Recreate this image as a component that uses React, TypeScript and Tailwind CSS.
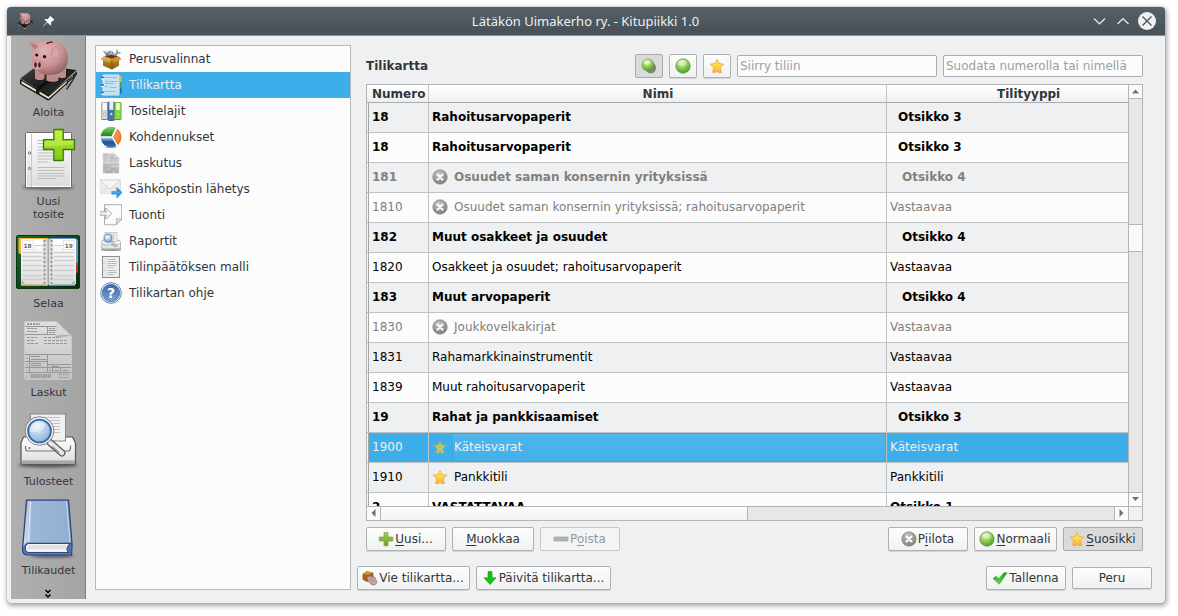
import React from "react";

/* Shared gradients used by every icon on the page */
function Defs() {
  return (
    <svg width="0" height="0" className="absolute" aria-hidden="true">
      <defs>
        <radialGradient id="pig" cx="0.4" cy="0.3" r="0.75">
          <stop offset="0" stopColor="#e2b0b2" />
          <stop offset="0.55" stopColor="#cf9698" />
          <stop offset="1" stopColor="#8d5f61" />
        </radialGradient>
        <linearGradient id="black" x1="0" y1="0" x2="1" y2="1">
          <stop offset="0" stopColor="#4a4a4a" />
          <stop offset="0.5" stopColor="#1d1d1d" />
          <stop offset="1" stopColor="#333" />
        </linearGradient>
        <linearGradient id="paper" x1="0" y1="0" x2="0" y2="1">
          <stop offset="0" stopColor="#ffffff" />
          <stop offset="1" stopColor="#dcdcdc" />
        </linearGradient>
        <linearGradient id="gray" x1="0" y1="0" x2="0" y2="1">
          <stop offset="0" stopColor="#e0e0e0" />
          <stop offset="1" stopColor="#c2c2c2" />
        </linearGradient>
        <linearGradient id="lime" x1="0" y1="0" x2="0" y2="1">
          <stop offset="0" stopColor="#b4ec2c" />
          <stop offset="1" stopColor="#7fcb1c" />
        </linearGradient>
        <linearGradient id="moss" x1="0" y1="0" x2="0" y2="1">
          <stop offset="0" stopColor="#a3cd55" />
          <stop offset="1" stopColor="#6da02c" />
        </linearGradient>
        <radialGradient id="ball" cx="0.4" cy="0.25" r="0.75">
          <stop offset="0" stopColor="#dcf4bd" />
          <stop offset="0.5" stopColor="#94cf58" />
          <stop offset="1" stopColor="#559a28" />
        </radialGradient>
        <radialGradient id="dull" cx="0.4" cy="0.25" r="0.8">
          <stop offset="0" stopColor="#c6c6c4" />
          <stop offset="1" stopColor="#7b7c79" />
        </radialGradient>
        <linearGradient id="gold" x1="0" y1="0" x2="0" y2="1">
          <stop offset="0" stopColor="#fde76a" />
          <stop offset="0.55" stopColor="#fbd440" />
          <stop offset="1" stopColor="#f9a94a" />
        </linearGradient>
        <radialGradient id="lens" cx="0.4" cy="0.3" r="0.75">
          <stop offset="0" stopColor="#e8f1fa" />
          <stop offset="1" stopColor="#86b0da" />
        </radialGradient>
        <linearGradient id="cover" x1="0" y1="0" x2="1" y2="0">
          <stop offset="0" stopColor="#d4e0ee" />
          <stop offset="0.18" stopColor="#9db7d6" />
          <stop offset="1" stopColor="#92aed0" />
        </linearGradient>
        <linearGradient id="forest" x1="0" y1="0" x2="1" y2="1">
          <stop offset="0" stopColor="#23652f" />
          <stop offset="0.5" stopColor="#0c4a1d" />
          <stop offset="1" stopColor="#032a0d" />
        </linearGradient>
        <linearGradient id="box" x1="0" y1="0" x2="0" y2="1">
          <stop offset="0" stopColor="#c98d29" />
          <stop offset="1" stopColor="#8a5a0c" />
        </linearGradient>
        <linearGradient id="orange" x1="0" y1="0" x2="1" y2="1">
          <stop offset="0" stopColor="#fbb36c" />
          <stop offset="1" stopColor="#e46a10" />
        </linearGradient>
        <linearGradient id="green" x1="0" y1="0" x2="0" y2="1">
          <stop offset="0" stopColor="#8cd07a" />
          <stop offset="1" stopColor="#1f8016" />
        </linearGradient>
        <linearGradient id="navy" x1="0" y1="0" x2="0" y2="1">
          <stop offset="0" stopColor="#a9c5e8" />
          <stop offset="0.45" stopColor="#1f4e92" />
          <stop offset="1" stopColor="#3f78bf" />
        </linearGradient>
        <linearGradient id="help" x1="0" y1="0" x2="0" y2="1">
          <stop offset="0" stopColor="#3b67a5" />
          <stop offset="1" stopColor="#7ea3d2" />
        </linearGradient>
        <linearGradient id="check" x1="0" y1="0" x2="0" y2="1">
          <stop offset="0" stopColor="#1fa31f" />
          <stop offset="1" stopColor="#62e04a" />
        </linearGradient>
        <filter id="soft" x="-30%" y="-100%" width="160%" height="300%">
          <feGaussianBlur stdDeviation="1.6" />
        </filter>
      </defs>
    </svg>
  );
}

type Box = { size: number; view: number; children: React.ReactNode; className?: string };
function Svg({ size, view, children, className = "" }: Box) {
  return (
    <svg width={size} height={size} viewBox={`0 0 ${view} ${view}`} fill="none" className={`shrink-0 ${className}`}>
      {children}
    </svg>
  );
}

/* ---------- large icons ---------- */
function Piggy({ size = 64 }: { size?: number }) {
  return (
    <Svg size={size} view={64}>
      <path d="M4 41v5l28 16.500 2-1 27-25v-3L33 57z" fill="#111" />
      <path d="M5.500 43l27 15.800L57 37.500V39L32.500 61 5.500 45.500z" fill="#e9e4c4" />
      <path d="M4.300 40.500L22 27 60.500 32 33 57.500z" fill="url(#black)" />
      <path d="M20 50.500L48 30.500l3 .6L23.500 52z" fill="#000" opacity="0.55" />
      <path d="M20 51l3.500 2v3.800l-3.500-2z" fill="#1a1a1a" />
      <path d="M60.500 34c-1 4-3 8-10 17.500" stroke="#333" strokeWidth="1.500" />
      <path d="M58 38.500l-6.500 4-.8 5" stroke="#222" strokeWidth="1.200" />
      <path d="M19 27h9.500v13.500c-1.500 2-7.500 2-9.500 0zM30.500 28h11.800v14.500c-2 1.800-9.500 1.800-11.800 0zM42 26h8v13c-1.500 1.500-6 1.500-8 0z" fill="#c08a8c" />
      <path d="M13 4.500c2-1.500 6-1.500 10 0 3-1.500 7-2.300 12-2 11 1 17 9 17 18C52 32 44 37 34 37c-9 0-17-4.500-18-14-1-4 0-8 2-11-2-2-4-4-5-7.500z" fill="url(#pig)" />
      <path d="M14.500 5c3 0 6 1.500 8 3.500l-3.500 3c-2-1.500-3.500-3.500-4.500-6.500z" fill="#b27f81" />
      <ellipse cx="39.500" cy="15" rx="4" ry="5.300" fill="#d9a5a7" stroke="#b98688" strokeWidth="0.700" />
      <ellipse cx="21.500" cy="27" rx="5.700" ry="5" fill="#d89b9d" stroke="#b07c7e" strokeWidth="0.500" />
      <ellipse cx="19.500" cy="26.800" rx="1.300" ry="2.700" fill="#3a1c1d" />
      <ellipse cx="23.500" cy="27" rx="1.300" ry="2.700" fill="#3a1c1d" />
      <circle cx="20.700" cy="17" r="1.600" fill="#1a0d0d" />
      <circle cx="28.500" cy="18.700" r="1.600" fill="#1a0d0d" />
      <path d="M30.500 5.500c2-1 4-1.500 6-1.500" stroke="#4e2022" strokeWidth="1.700" />
    </Svg>
  );
}

function NewDocument() {
  return (
    <Svg size={64} view={64}>
      <ellipse cx="32" cy="60" rx="26" ry="2.500" fill="#000" opacity="0.45" filter="url(#soft)" />
      <rect x="9.500" y="5.500" width="46" height="55" rx="1.500" fill="url(#paper)" stroke="#6b6b6b" />
      <rect x="10.500" y="6.500" width="44" height="53" stroke="#fff" />
      <path d="M15.500 7v53" stroke="#c9c9c9" />
      <circle cx="13.500" cy="26" r="1.200" stroke="#777" fill="#eee" />
      <circle cx="13.500" cy="41.500" r="1.200" stroke="#777" fill="#eee" />
      <path d="M21.500 13.500h27M21.500 16.500h27M21.500 20h27M21.500 23h27M21.500 26h27M21.500 29h27M21.500 32h18M21.500 35h11M21.500 40.500h27M21.500 43.500h27M21.500 46.500h27M21.500 49h27M21.500 51.500h18" stroke="#bdbdbd" strokeWidth="1.200" />
      <path d="M37.800 2.500h9.400v10.200h11.300v9.800H47.200v11h-9.400v-11H27.500v-9.800h10.300z" fill="url(#lime)" stroke="#3e7a0a" strokeWidth="1.300" strokeLinejoin="round" />
      <path d="M39.200 4h6.600v10H57v3.500c-10 1-20 2-28 2V14h10.200z" fill="#e0f88a" opacity="0.35" />
    </Svg>
  );
}

function Diary() {
  const lines = [23.5, 27.5, 31.5, 36.5, 41.5, 46.5, 50.5];
  return (
    <Svg size={64} view={64}>
      <rect x="0.500" y="6.500" width="63" height="53" rx="1.500" fill="url(#forest)" stroke="#06350f" />
      <path d="M2.500 9h30v3h-26v14l-4-2z" fill="#f0b23a" />
      <path d="M33 9h26l3 2v25h-4z" fill="#7391cb" />
      <path d="M59 34h2.800v9l-2.800 2z" fill="#c8352c" />
      <path d="M5 55h27v2H5z" fill="#d69b31" />
      <path d="M33 55h26v2H33z" fill="#6d8cc2" />
      <rect x="5" y="10" width="55" height="45.500" rx="1" fill="url(#paper)" />
      <path d="M27 10h10v45.500H27z" fill="#dcdcdc" />
      <path d="M31.500 10h1.500v45.500h-1.500z" fill="#a9a9a9" />
      {lines.map((y) => (
        <path key={y} d={`M6.500 ${y}h20M38 ${y}h20`} stroke="#cfcfcf" strokeWidth="1.600" />
      ))}
      <path d="M17.500 16.500h9M38 16.500h9" stroke="#cfcfcf" />
      <path d="M28.500 11v44M35.500 11v44" stroke="#888" strokeWidth="1.800" strokeDasharray="1.800 2.400" />
      <rect x="6.500" y="11.500" width="10.500" height="9" fill="#fcfcfc" stroke="#d5d5d5" strokeWidth="0.600" />
      <rect x="47.500" y="11.500" width="10.500" height="9" fill="#fcfcfc" stroke="#d5d5d5" strokeWidth="0.600" />
      <text x="11.500" y="18.500" fontSize="5.800" fontWeight="bold" textAnchor="middle" fill="#666" fontFamily="DejaVu Sans, sans-serif">18</text>
      <text x="52.800" y="18.500" fontSize="5.800" fontWeight="bold" textAnchor="middle" fill="#666" fontFamily="DejaVu Sans, sans-serif">19</text>
      <path d="M6.500 52v2h2M58 52v2h-2" stroke="#777" strokeWidth="0.700" />
    </Svg>
  );
}

function InvoiceSheet({ size = 64 }: { size?: number }) {
  return (
    <Svg size={size} view={64}>
      <path d="M8.500 4.500q0-1 1-1H40L55.500 18v42q0 1.500-1.500 1.500H10q-1.500 0-1.500-1.500z" fill="url(#gray)" stroke="#c9c9c9" strokeWidth="0.800" />
      <g stroke="#969696" strokeWidth="1">
        <path d="M11 6h13" strokeDasharray="2 1" strokeWidth="2" />
        <path d="M9 8.500h33M9 16.500h41M31.500 9v7.500M31.500 12.500h9" />
        <path d="M11 10.500h10M11 13.500h11M33 10.500h6M33 14.500h6" strokeDasharray="3 .6" />
        <path d="M11 19.500h10M11 22.500h7M11 25.500h11M28 19.500h17M28 22.500h23M28 25.500h23" strokeDasharray="3 1" />
        <path d="M9 36.500h46M9 43.500h22.500M9 49.500h46M9 54.500h46M31.500 36.500v18M13.500 36.500v18M31.500 46.500h24M36.500 46v8.500M44.500 50v4" />
        <path d="M15 38.500h9M15 41.500h15M15 45.500h10M15 47.500h10M10.500 40.500h1.500M10.500 46.500h1.500M33 52.500h2M37 48.500h6M38 52.500h5M47 52.500h5" />
        <path d="M15 58h20" strokeWidth="4" strokeDasharray="1.600 .8" />
        <path d="M43 56.500h10M43 59.500h10" strokeDasharray="2.500 1" />
      </g>
      <path d="M40 3.500c1 6-.5 12-1 15 5-2 12-2 16.500-.5z" fill="#d9d9d9" stroke="#c2c2c2" strokeWidth="0.600" />
      <path d="M39 18.500c5-2 12-2 16.500-.5-4 0-10 1-15.500 2z" fill="#999" opacity="0.6" />
    </Svg>
  );
}

function PrintPreview({ size = 64 }: { size?: number }) {
  return (
    <Svg size={size} view={64}>
      <ellipse cx="32" cy="58" rx="30" ry="2.500" fill="#000" opacity="0.5" filter="url(#soft)" />
      <path d="M7.500 30h49l3 6v19q0 2.500-2.500 2.500H7.500Q5 57.500 5 55V36z" fill="url(#paper)" stroke="#565656" strokeWidth="1.200" />
      <path d="M5.500 53.500h53.500v1.500q0 2-2 2H7.500q-2 0-2-2z" fill="#a6a6a6" />
      <rect x="14.500" y="7" width="35" height="27" fill="#f1f1f1" stroke="#888" />
      <path d="M17 10.500h27M17 13.500h27M17 16.500h27M17 19.500h27M17 22.500h27M17 25.500h27" stroke="#c3c3c3" strokeWidth="1.200" />
      <path d="M9.500 39v2.500q0 2.500 2.500 2.500h40q2.500 0 2.500-2.500V38.500" stroke="#777" strokeWidth="1.200" />
      <circle cx="13.500" cy="41" r="1" fill="#666" />
      <path d="M34 35.500L46 46" stroke="#5c5c5c" strokeWidth="7" strokeLinecap="round" />
      <path d="M34 35.500L46 46" stroke="#e6e6e4" strokeWidth="4.500" strokeLinecap="round" />
      <path d="M36 39.500l7 6" stroke="#8e8e8c" strokeWidth="1.600" />
      <circle cx="23.500" cy="24" r="14.300" fill="#f4f4f4" stroke="#777" strokeWidth="0.900" />
      <circle cx="23.500" cy="24" r="11.400" fill="url(#lens)" stroke="#3a69a8" strokeWidth="1.900" />
      <path d="M14.500 25a9 8 0 0 1 15-8c-1 6-8 9-15 8z" fill="#fff" opacity="0.4" />
    </Svg>
  );
}

function BlueBook() {
  return (
    <Svg size={64} view={64}>
      <ellipse cx="36" cy="59.500" rx="22" ry="2" fill="#000" opacity="0.5" filter="url(#soft)" />
      <path d="M10.500 4h42l3.500 43.500v4l-.5 7.500H11Q6.500 58.500 6.500 53z" fill="#5f7db4" stroke="#2c4380" strokeWidth="1.200" strokeLinejoin="round" />
      <path d="M11.500 5h40l3.500 41.500H12Q9 47 7.500 50z" fill="url(#cover)" />
      <path d="M14.500 5.500L12.500 46" stroke="#e3ebf4" strokeWidth="1.200" />
      <path d="M13 47.500h41.500c-4 3-5 6-1.500 9H13c-5 0-5-9 0-9z" fill="#f2f2f2" stroke="#2f4884" strokeWidth="1.100" />
      <path d="M53.500 48.500c-3 2.500-3.500 4.500-.5 7.500h2.500z" fill="#4f6cac" />
      <path d="M12 50h38M11.500 52h38" stroke="#d0d0d0" />
      <path d="M50.500 5l3.500 41" stroke="#cddbed" strokeWidth="1" />
    </Svg>
  );
}

/* ---------- list icons, 22px ---------- */
const L = ({ children }: { children: React.ReactNode }) => (
  <Svg size={22} view={22}>{children}</Svg>
);

const OpenBox = () => (
  <L>
    <path d="M5 8l1.500-5.500L8 4.500 11 2l1.500 5L17 3.500l1 2L16 9z" fill="#a4afb7" />
    <path d="M3.500 3l4 4.500M9.500 3l-2 4.500M12 3.500l1.500 4" stroke="#66737e" strokeWidth="1.100" />
    <path d="M15 7.500l3-3M17 1.800c-.5 2 1 3.500 3.500 3" stroke="#8f9ba5" strokeWidth="1.600" />
    <path d="M3 9.500h16v8.300l-7 3.700-9-3.700z" fill="url(#box)" />
    <path d="M4 8.500l7-1.800 7.500 1.800-6.500 2.200z" fill="#5f3c08" />
    <path d="M3.500 8.500l8.300 2.200L9 14.500.5 11.500z" fill="#dba646" />
    <path d="M11.800 10.700l7-2.500 2.700 3L14 14.500z" fill="#cd922e" />
    <path d="M12 15v6" stroke="#6d4708" strokeWidth="0.800" />
  </L>
);
const Notebook = () => (
  <L>
    <path d="M17 2h4.500v6H17z" fill="#e0bd39" /><path d="M17 8h4.500v6H17z" fill="#3da344" /><path d="M17 14h4.500v5.500H17z" fill="#1565bd" />
    <rect x="2.500" y="0.500" width="17" height="21" rx="1" fill="#c3e3f5" stroke="#97c9e6" strokeWidth="0.800" />
    <path d="M5 3.500h12M5 7.500h5M11 7.500h6M5 9.500h9M5 12.500h3M10 13.500h6M5 17.500h10" stroke="#76b1d6" strokeWidth="0.900" strokeDasharray="3 .7" />
    <path d="M1 3.500h3M1 11h3M1 18.500h3" stroke="#3c6d8e" strokeWidth="1.300" />
    <path d="M1 5h3M1 12.500h3M1 20h3" stroke="#fff" strokeWidth="1" />
  </L>
);
const Binders = () => (
  <L>
    <rect x="1.500" y="2.500" width="6.500" height="17" rx="0.800" fill="#d4d6d4" stroke="#9b9e9b" strokeWidth="0.700" />
    <rect x="3" y="3" width="3.500" height="7" fill="#fafafa" />
    <rect x="8" y="2" width="6.500" height="18.500" rx="0.800" fill="#4674b2" stroke="#2c5288" strokeWidth="0.700" />
    <rect x="9.300" y="0.800" width="4" height="9" fill="#e8eef5" />
    <rect x="14.700" y="2.500" width="6.500" height="17" rx="0.800" fill="#86dc3a" stroke="#63ad25" strokeWidth="0.700" />
    <rect x="16.200" y="3" width="3.500" height="7" fill="#f2fbe8" />
    <path d="M1.500 19.500h6.500M14.700 19.500h6.500" stroke="#666" strokeWidth="0.600" />
    <circle cx="4.800" cy="14" r="1.300" fill="#f7f7f7" stroke="#888" strokeWidth="0.500" />
    <circle cx="11.300" cy="14" r="1.500" fill="#d8e6f8" stroke="#2c5288" strokeWidth="0.500" />
    <circle cx="18" cy="14" r="1.300" fill="#e8fbd2" stroke="#4f9a1a" strokeWidth="0.500" />
  </L>
);
const Pie = () => (
  <L>
    <ellipse cx="11" cy="21.200" rx="6" ry="0.800" fill="#000" opacity="0.3" />
    <path d="M12 11.700L16.500 20A10.300 10.300 0 0 1 .8 11.700z" fill="url(#navy)" />
    <path d="M11.500 10.200H.8A10.300 10.300 0 0 1 15.800 1.800z" fill="url(#green)" />
    <path d="M13.600 11L17.500 3.300A10.500 10.500 0 0 1 18 18.500z" fill="url(#orange)" stroke="#d4650c" strokeWidth="0.700" />
  </L>
);
const Mail = () => (
  <L>
    <path d="M0 2h20.500v13.500H0z" fill="#ececec" stroke="#dadada" strokeWidth="0.700" />
    <path d="M0 2h20.500L11 10.500Q10 11.200 9 10.500z" fill="#f6f6f6" stroke="#c9c9c9" strokeWidth="0.700" />
    <path d="M0 15.500l7.500-6M20.500 15.500l-7.500-6" stroke="#d5d5d5" strokeWidth="0.700" />
    <path d="M11.500 13h5V8.800l6 5.700-6 6.200v-4.200h-5z" fill="#2b95ee" />
    <path d="M11.500 13.500h5.500l4.500 1H11.500z" fill="#6cbaf8" />
  </L>
);
const ImportDoc = () => (
  <L>
    <path d="M4.500.7h17.200v14.800L16 20.800H4.500z" fill="#fbfbfb" stroke="#a5a5a5" strokeWidth="0.900" />
    <path d="M21.500 15.500c-2-1-4-1-5.500-.6.500 1.800.8 3.800 0 5.800z" fill="#dedede" stroke="#a8a8a8" strokeWidth="0.700" />
    <path d="M0 7.800h6.500L4.500 4.500h2.300l5 5-5 5H4.500l2-3.300H0z" fill="#f4f4f4" stroke="#a2a2a2" strokeWidth="0.900" />
  </L>
);
const Template = () => (
  <L>
    <rect x="2.500" y="0.500" width="17" height="21" fill="#ededed" stroke="#8d8d8d" strokeWidth="1" />
    <path d="M5.500 1v20" stroke="#dadada" strokeWidth="0.800" />
    <path d="M7.500 3.500h8M7.500 5.500h9M7.500 7.500h9M7.500 9.500h9M7.500 11.500h6M7.500 14.500h9M7.500 16.500h9M7.500 18.500h6" stroke="#bcbcbc" strokeWidth="1" />
    <circle cx="4" cy="7" r="0.500" fill="#777" /><circle cx="4" cy="14" r="0.500" fill="#777" />
  </L>
);
const Help = () => (
  <L>
    <circle cx="11" cy="11" r="10.300" fill="#fff" stroke="#5a80b5" strokeWidth="1" />
    <circle cx="11" cy="11" r="8.700" fill="url(#help)" stroke="#41689f" strokeWidth="0.700" />
    <text x="11" y="16" textAnchor="middle" fontSize="14" fontWeight="bold" fill="#fff" fontFamily="DejaVu Sans, sans-serif">?</text>
  </L>
);

/* ---------- small icons, 16px ---------- */
const Star = ({ tinted = false }: { tinted?: boolean }) => (
  <Svg size={16} view={16}>
    <path d="M8 1.400l2.100 4.100 4.700.7-3.400 3.400 1 5H9.500L8 13.300l-1.500 1.300H3.600l1-5L1.200 6.200l4.700-.7z" fill={tinted ? "#adc67e" : "url(#gold)"} stroke={tinted ? "#86a572" : "#eba54a"} strokeWidth="0.800" strokeLinejoin="round" />
  </Svg>
);
const Cross = () => (
  <Svg size={16} view={16}>
    <circle cx="8" cy="8" r="7.100" fill="url(#dull)" stroke="#7b7c79" strokeWidth="0.800" />
    <path d="M5.500 5.500l5 5M10.500 5.500l-5 5" stroke="#fff" strokeWidth="2.100" strokeLinecap="round" />
  </Svg>
);
const GreenBall = () => (
  <Svg size={16} view={16}>
    <circle cx="8" cy="8" r="7.200" fill="url(#ball)" stroke="#549425" strokeWidth="0.700" />
    <ellipse cx="7.500" cy="5" rx="4.500" ry="3" fill="#fff" opacity="0.35" />
  </Svg>
);
const TwoBalls = () => (
  <Svg size={16} view={16}>
    <circle cx="9.800" cy="9.900" r="5.300" fill="#808080" />
    <circle cx="7" cy="7" r="6" fill="url(#ball)" stroke="#5f9e37" strokeWidth="0.600" />
    <ellipse cx="6.200" cy="4.600" rx="3.300" ry="2.200" fill="#fff" opacity="0.5" />
  </Svg>
);
const Plus = () => (
  <Svg size={16} view={16}>
    <path d="M6 1.500h4V6h4.800v4H10v4.800H6V10H1.200V6H6z" fill="url(#moss)" stroke="#7ea645" strokeWidth="0.700" />
  </Svg>
);
const Minus = () => (
  <Svg size={16} view={16}>
    <rect x="1" y="6" width="14" height="4" fill="#b3b3b3" stroke="#a3a3a3" strokeWidth="0.700" />
  </Svg>
);
const ExportBox = () => (
  <Svg size={16} view={16}>
    <path d="M1 4l4-2.500L11 3v7l-6 1.500L1 9.500z" fill="#a16a18" stroke="#6e4508" strokeWidth="0.600" />
    <path d="M1 4l4-2.500L11 3 6 4.500z" fill="#d39b40" />
    <path d="M5 6.500l3-.5 5 1.500 2 5-2.500 2.700-3.500-1L5.500 9.500z" fill="#cfa3a0" stroke="#8a6260" strokeWidth="0.700" />
    <path d="M7 8l4 4M9 7.500l3 3.500" stroke="#9d7270" strokeWidth="0.600" />
  </Svg>
);
const DownArrow = () => (
  <Svg size={16} view={16}>
    <path d="M6 1.500h4v6.300h4L8 14.600 2 7.800h4z" fill="#12c312" stroke="#13930f" strokeWidth="0.600" />
  </Svg>
);
const Check = () => (
  <Svg size={16} view={16}>
    <path d="M1 8.500l3.200-2.200 2.600 2.500L12 2.800h3.200L7.200 14.200z" fill="url(#check)" stroke="#2a9a2a" strokeWidth="0.600" strokeLinejoin="round" />
  </Svg>
);

/* ---------- widgets ---------- */
type BtnProps = { w: string; icon?: React.ReactNode; children?: React.ReactNode; pressed?: boolean; disabled?: boolean; h?: string };
function Button({ w, icon, children, pressed, disabled, h = "h-6" }: BtnProps) {
  return (
    <button
      className={`flex shrink-0 items-center justify-center rounded-[2px] border whitespace-nowrap ${w} ${h} ${
        pressed ? "border-[#a8aaac] bg-[#dadadb]" : disabled ? "border-[#c5c7c9] bg-[#f3f4f5]" : "border-[#aeb0b2] bg-linear-to-b from-[#fdfdfd] to-[#f0f1f1] shadow-[0_1px_0_#d2d4d5]"
      } ${disabled ? "text-[#95989b]" : "text-[#31363b]"}`}
    >
      {icon && <span className={children ? "mr-px -ml-px" : ""}>{icon}</span>}
      {children && <span>{children}</span>}
    </button>
  );
}
const U = ({ children }: { children: string }) => <span className="underline underline-offset-2">{children}</span>;

function Arrow({ d }: { d: string }) {
  return (
    <svg width="13" height="13" viewBox="0 0 13 13" fill="#6e7174"><path d={d} /></svg>
  );
}

const sidebar = [
  { label: ["Aloita"], icon: <Piggy /> },
  { label: ["Uusi", "tosite"], icon: <NewDocument /> },
  { label: ["Selaa"], icon: <Diary /> },
  { label: ["Laskut"], icon: <InvoiceSheet /> },
  { label: ["Tulosteet"], icon: <PrintPreview /> },
  { label: ["Tilikaudet"], icon: <BlueBook /> },
];

const pages = [
  { label: "Perusvalinnat", icon: <OpenBox /> },
  { label: "Tilikartta", icon: <Notebook />, active: true },
  { label: "Tositelajit", icon: <Binders /> },
  { label: "Kohdennukset", icon: <Pie /> },
  { label: "Laskutus", icon: <InvoiceSheet size={22} /> },
  { label: "Sähköpostin lähetys", icon: <Mail /> },
  { label: "Tuonti", icon: <ImportDoc /> },
  { label: "Raportit", icon: <PrintPreview size={22} /> },
  { label: "Tilinpäätöksen malli", icon: <Template /> },
  { label: "Tilikartan ohje", icon: <Help /> },
];

type Row = { no: string; name: string; type: string; level?: number; hidden?: boolean; star?: boolean; selected?: boolean };
const rows: Row[] = [
  { no: "18", name: "Rahoitusarvopaperit", type: "Otsikko 3", level: 3 },
  { no: "18", name: "Rahoitusarvopaperit", type: "Otsikko 3", level: 3 },
  { no: "181", name: "Osuudet saman konsernin yrityksissä", type: "Otsikko 4", level: 4, hidden: true },
  { no: "1810", name: "Osuudet saman konsernin yrityksissä; rahoitusarvopaperit", type: "Vastaavaa", hidden: true },
  { no: "182", name: "Muut osakkeet ja osuudet", type: "Otsikko 4", level: 4 },
  { no: "1820", name: "Osakkeet ja osuudet; rahoitusarvopaperit", type: "Vastaavaa" },
  { no: "183", name: "Muut arvopaperit", type: "Otsikko 4", level: 4 },
  { no: "1830", name: "Joukkovelkakirjat", type: "Vastaavaa", hidden: true },
  { no: "1831", name: "Rahamarkkinainstrumentit", type: "Vastaavaa" },
  { no: "1839", name: "Muut rahoitusarvopaperit", type: "Vastaavaa" },
  { no: "19", name: "Rahat ja pankkisaamiset", type: "Otsikko 3", level: 3 },
  { no: "1900", name: "Käteisvarat", type: "Käteisvarat", star: true, selected: true },
  { no: "1910", name: "Pankkitili", type: "Pankkitili", star: true },
  { no: "2", name: "VASTATTAVAA", type: "Otsikko 1", level: 1 },
];

function TableRow({ row, index }: { row: Row; index: number }) {
  const bg = row.selected ? "bg-[#3daee9]" : index % 2 ? "bg-[#fcfcfc]" : "bg-[#eff0f1]";
  const color = row.selected ? "text-[#eff0f1]" : row.hidden ? "text-[#808080]" : "text-black";
  const indent = row.level === 4 ? "pl-[15px]" : row.level === 3 ? "pl-[11px]" : "pl-[3px]";
  const marked = row.hidden || row.star;
  return (
    <div className={`flex h-[30px] shrink-0 ${color} ${row.level ? "font-bold" : ""}`}>
      <div className="w-px shrink-0 border-b border-[#b0b1b2] bg-[#f4f5f5]" />
      <div className={`flex w-[60px] shrink-0 items-center border-b border-l border-[#c1c2c3] border-l-[#a5a6a7] pb-px pl-[3px] ${bg}`}>{row.no}</div>
      <div className={`flex w-[458px] shrink-0 items-center border-b border-l border-[#c1c2c3] ${bg} ${marked ? "" : "pb-px pl-[3px]"}`}>
        {marked && (
          <span className="flex h-full w-[23px] shrink-0 items-center justify-end pr-1 pb-px">{row.star ? <Star tinted={row.selected} /> : <Cross />}</span>
        )}
        <span className={marked ? `flex h-full flex-1 items-center pb-px ${row.selected ? "border border-[#3ba6df] bg-linear-to-b from-[#50b6ec] to-[#42afe9] pl-px" : "pl-[2px]"}` : ""}>{row.name}</span>
      </div>
      <div className={`flex flex-1 items-center border-b border-l border-[#c1c2c3] pb-px ${indent} ${bg}`}>{row.type}</div>
    </div>
  );
}

function AccountTable() {
  return (
    <div className="flex h-[437px] w-[777px] flex-col border border-[#b4b5b6] bg-[#fcfcfc]">
      <div className="flex h-[421px]">
        <div className="flex w-[761px] flex-col overflow-hidden">
          <div className="flex h-[18px] shrink-0 border-b border-[#a9abac] bg-linear-to-b from-white to-[#eeefef] leading-[18px] font-bold text-[#31363b]">
            <div className="w-[61px] shrink-0 pl-[5px]">Numero</div>
            <div className="w-[458px] shrink-0 border-l border-[#c4c5c6] pl-px text-center">Nimi</div>
            <div className="flex-1 border-l border-[#c4c5c6] pl-[110px]">Tilityyppi</div>
          </div>
          {rows.map((r, i) => <TableRow key={i} row={r} index={i} />)}
        </div>
        <div className="flex w-[14px] flex-col border-l border-[#b4b5b6] bg-[#e6e7e7]">
          <div className="h-[14px] border-b border-[#b4b5b6] bg-[#fafafa]"><Arrow d="M6.500 4.500L10 8.500H3z" /></div>
          <div className="h-[125px]" />
          <div className="h-[28px] border-y border-[#b4b5b6] bg-[#fafafa]" />
          <div className="flex-1" />
          <div className="h-[14px] border-t border-[#b4b5b6] bg-[#fafafa]"><Arrow d="M6.500 8L3 4h7z" /></div>
        </div>
      </div>
      <div className="flex h-[14px] border-t border-[#b4b5b6] bg-[#e6e7e7]">
        <div className="w-[14px] border-r border-[#b4b5b6] bg-[#fafafa]"><Arrow d="M4.500 6l4-4v8z" /></div>
        <div className="w-[367px] border-r border-[#b4b5b6] bg-linear-to-b from-[#fdfdfd] to-[#f1f2f2]" />
        <div className="flex-1" />
        <div className="w-[14px] border-l border-[#b4b5b6] bg-[#fafafa]"><Arrow d="M8.500 6l-4-4v8z" /></div>
        <div className="w-[14px] border-l border-[#b4b5b6] bg-[#eff0f1]" />
      </div>
    </div>
  );
}

function Field({ text }: { text: string }) {
  return (
    <div className="flex h-[22px] w-[200px] shrink-0 items-center overflow-hidden rounded-[2px] border border-[#aaacad] bg-[#fcfcfc] pl-[2px] whitespace-nowrap text-[#9b9ea1]">
      {text}
    </div>
  );
}

export default function App() {
  return (
    <div className="h-[616px] w-[1178px] overflow-hidden bg-white pt-[7px] pl-[7px] font-['DejaVu_Sans',sans-serif] text-[12px] leading-[14px] text-[#31363b]">
      <Defs />
      <div className="flex h-[596px] w-[1158px] flex-col overflow-hidden rounded-[4px] bg-[#eff0f1] shadow-[1px_2px_5px_1px_rgba(0,0,0,0.35),0_0_1px_#888]">
        <header className="flex h-[29px] shrink-0 items-center border-b border-[#3daee9] bg-linear-to-b from-[#556068] to-[#475057] pr-[9px] pl-[9px] text-[#eff0f1]">
          <Piggy size={18} />
          <svg width="14" height="14" viewBox="0 0 14 14" className="ml-[8px]" fill="#fcfcfc">
            <path d="M8 1.500L12.500 6l-1.500.5-2 2 .2 3-1.400-.8-2.300-2.300L1 12.500 .8 12.300 5 8 2.700 5.800 2.500 5l3 .2 2-2z" />
          </svg>
          <div className="flex-1 pl-[22px] text-center font-['Noto_Sans',sans-serif] text-[13px]">Lätäkön Uimakerho ry. - Kitupiikki 1.0</div>
          <svg width="63" height="18" viewBox="0 0 63 18" fill="none" stroke="#eff0f1" strokeWidth="1.200">
            <path d="M1 6.500l5.500 5.500L12 6.500M24.500 12L30 6.500l5.500 5.500" />
            <circle cx="54" cy="9" r="9" fill="#eff0f1" stroke="none" />
            <path d="M49.500 4.500l9 9M58.500 4.500l-9 9" stroke="#475057" strokeWidth="1.300" />
          </svg>
        </header>

        <div className="flex h-[567px]">
          <nav className="ml-1 flex h-[563px] w-[75px] shrink-0 flex-col items-center border-r border-[#7e7e7e] bg-linear-to-r from-[#afafaf] to-[#a4a4a4] pt-[2px] text-[11px] leading-[13px]">
            {sidebar.map((s) => (
              <div key={s.label[0]} className="flex flex-col items-center pb-[8px]">
                {s.icon}
                <div className="mt-[4px] pl-px text-center">
                  {s.label.map((t) => <div key={t}>{t}</div>)}
                </div>
              </div>
            ))}
            <svg width="8" height="10" viewBox="0 0 8 10" className="mt-[4px] shrink-0" fill="none" stroke="#000" strokeWidth="1.500">
              <path d="M1.500 1L4 3.500 6.500 1M1.500 5.500L4 8l2.500-2.500" />
            </svg>
          </nav>

          <div className="mt-[9px] ml-[9px] h-[545px] w-[256px] shrink-0 border border-[#b7b8b9] bg-[#fcfcfc]">
            {pages.map((p) => (
              <div key={p.label} className={`flex h-[26px] items-center gap-[7px] pl-1 ${p.active ? "bg-[#3daee9] text-[#eff0f1]" : ""}`}>
                {p.icon}
                <span>{p.label}</span>
              </div>
            ))}
          </div>

          <main className="ml-[6px] flex flex-1 flex-col pr-[13px]">
            <div className="flex flex-col pr-[9px] pl-[9px]">
              <div className="mt-[18px] flex h-6 items-center gap-[6px]">
                <span className="flex-1 font-bold">Tilikartta</span>
                <Button w="w-7" icon={<TwoBalls />} pressed />
                <Button w="w-7" icon={<GreenBall />} />
                <Button w="w-7" icon={<Star />} />
                <Field text="Siirry tiliin" />
                <Field text="Suodata numerolla tai nimellä" />
              </div>
              <div className="mt-[6px]"><AccountTable /></div>
              <div className="mt-[6px] flex gap-[6px]">
                <Button w="w-20" icon={<Plus />}><U>U</U>usi...</Button>
                <Button w="w-[82px]"><U>M</U>uokkaa</Button>
                <Button w="w-20" icon={<Minus />} disabled>P<U>o</U>ista</Button>
                <div className="flex-1" />
                <Button w="w-20" icon={<Cross />}>P<U>i</U>ilota</Button>
                <Button w="w-[83px]" icon={<GreenBall />}><U>N</U>ormaali</Button>
                <Button w="w-20" icon={<Star />} pressed><U>S</U>uosikki</Button>
              </div>
            </div>
            <div className="mt-[15px] flex items-center gap-[6px]">
              <Button w="w-[113px]" icon={<ExportBox />}>Vie tilikartta...</Button>
              <Button w="w-[135px]" icon={<DownArrow />}>Päivitä tilikartta...</Button>
              <div className="flex-1" />
              <Button w="w-20" icon={<Check />}>Tallenna</Button>
              <Button w="w-20" h="h-[22px]">Peru</Button>
            </div>
          </main>
        </div>
      </div>
    </div>
  );
}
